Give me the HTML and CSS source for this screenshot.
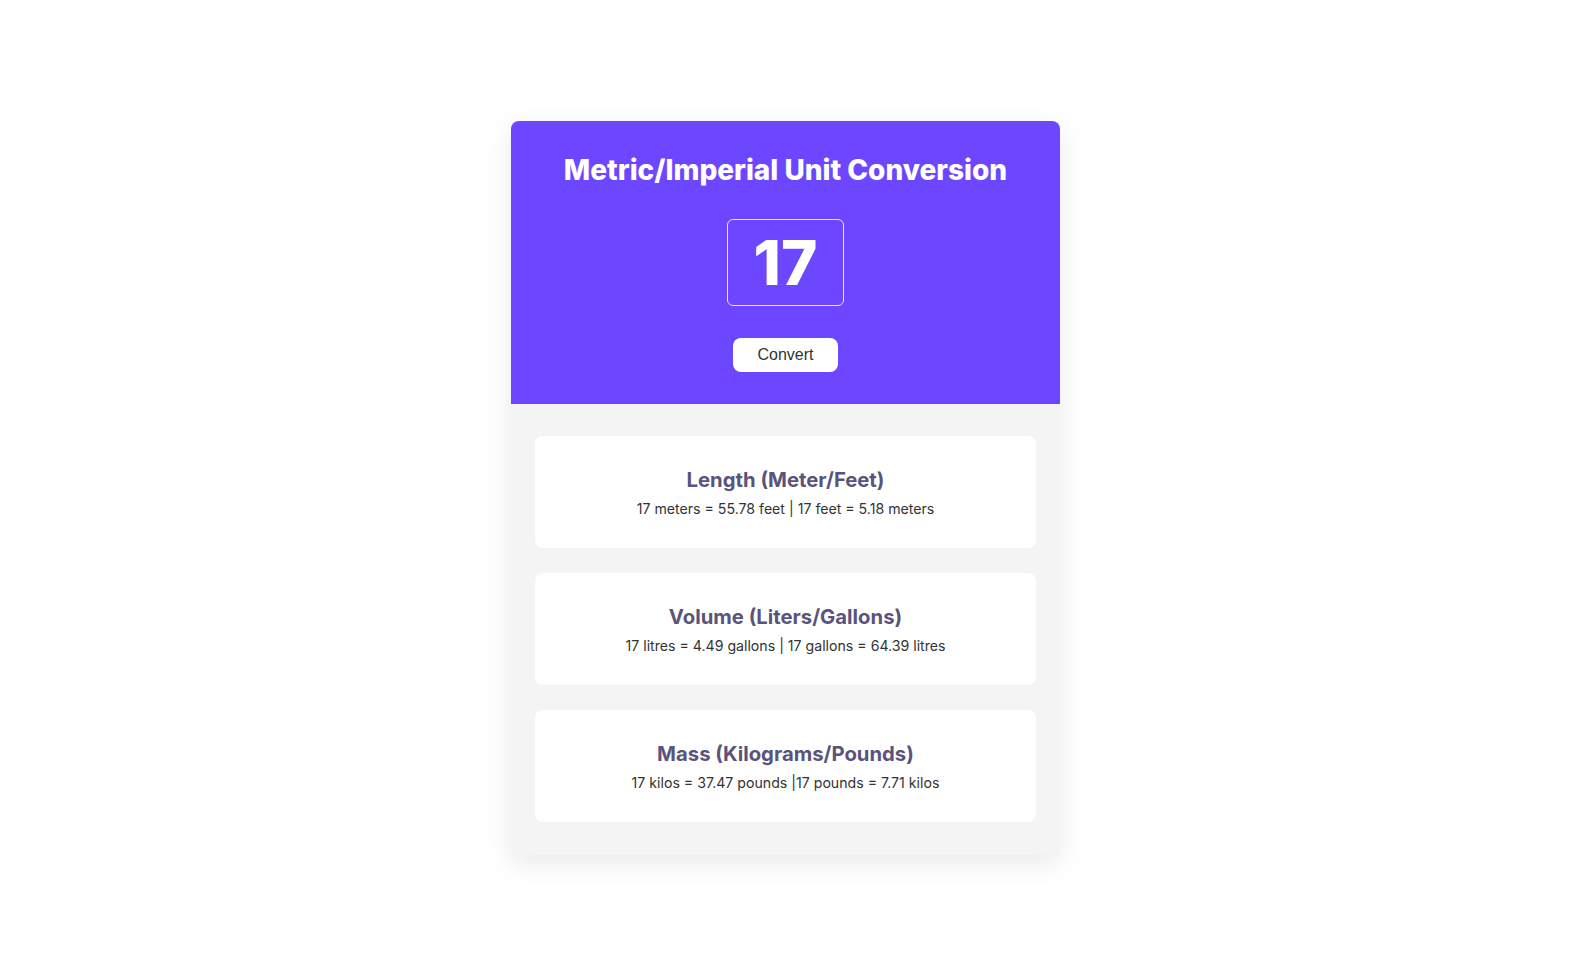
FILE: index.html
```html
<!DOCTYPE html>
<html lang="en">
<head>
<meta charset="utf-8">
<title>Metric/Imperial Unit Conversion</title>
<link rel="stylesheet" href="styles.css">
</head>
<body>
<main class="container">
  <section class="top">
    <h1 class="title">Metric/Imperial Unit Conversion</h1>
    <input class="num-input" type="text" value="17">
    <button class="convert-btn">Convert</button>
  </section>
  <section class="results">
    <div class="result-card">
      <h2 class="result-title">Length (Meter/Feet)</h2>
      <p class="result-text">17 meters = 55.78 feet | 17 feet = 5.18 meters</p>
    </div>
    <div class="result-card">
      <h2 class="result-title">Volume (Liters/Gallons)</h2>
      <p class="result-text">17 litres = 4.49 gallons | 17 gallons = 64.39 litres</p>
    </div>
    <div class="result-card">
      <h2 class="result-title">Mass (Kilograms/Pounds)</h2>
      <p class="result-text">17 kilos = 37.47 pounds |17 pounds = 7.71 kilos</p>
    </div>
  </section>
</main>
</body>
</html>
```
FILE: styles.css
```css
* { box-sizing: border-box; }
html, body { margin: 0; padding: 0; }
body {
  background: #ffffff;
  font-family: Inter, "Noto Sans", sans-serif;
  display: flex;
  justify-content: center;
  align-items: flex-start;
  min-height: 100vh;
  padding-top: 121px;
}
.container {
  width: 549px;
  background: #f4f4f4;
  border-radius: 8px 8px 0 0;
  box-shadow: 0 8px 28px rgba(0, 0, 0, 0.09);
}
.top {
  background: #6c47ff;
  border-radius: 8px 8px 0 0;
  display: flex;
  flex-direction: column;
  align-items: center;
  padding: 33px 0 32px;
}
.title {
  margin: 0;
  font-size: 28px;
  line-height: 32px;
  font-weight: 800;
  color: #ffffff;
}
.num-input {
  margin-top: 33px;
  width: 117px;
  height: 87px;
  background: transparent;
  border: 1px solid #e8e2ff;
  border-radius: 6px;
  color: #ffffff;
  font-family: Inter, sans-serif;
  font-size: 62px;
  font-weight: 800;
  text-align: center;
  padding: 0;
  outline: none;
}
.convert-btn {
  margin-top: 32px;
  width: 105px;
  height: 34px;
  border: none;
  border-radius: 8px;
  background: #ffffff;
  color: #333333;
  font-family: "Liberation Sans", Arial, sans-serif;
  font-size: 16px;
  padding: 0;
}
.results {
  padding: 32px 24px 33px;
  display: flex;
  flex-direction: column;
  gap: 25px;
}
.result-card {
  background: #ffffff;
  border-radius: 8px;
  height: 112px;
  padding-top: 32px;
  text-align: center;
}
.result-title {
  margin: 0;
  font-size: 20.3px;
  line-height: 24px;
  font-weight: 700;
  color: #5a537b;
}
.result-text {
  margin: 7px 0 0;
  font-size: 14.15px;
  line-height: 20px;
  color: #333333;
}
```
